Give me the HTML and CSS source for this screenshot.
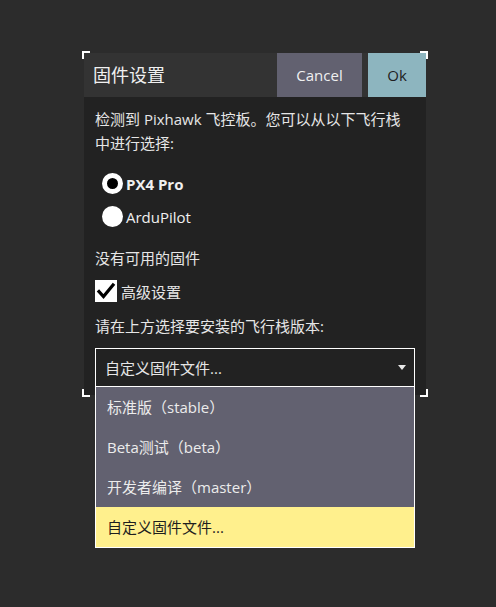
FILE: index.html
```html
<!DOCTYPE html>
<html>
<head>
<meta charset="utf-8">
<link rel="stylesheet" href="styles.css">
</head>
<body>
<div class="canvas">
  <div class="dialog">
    <span class="corner tl"></span><span class="corner tr"></span>
    <span class="corner bl"></span><span class="corner br"></span>
    <div class="titlebar">
      <div class="title">固件设置</div>
      <div class="btn cancel">Cancel</div>
      <div class="btn ok">Ok</div>
    </div>
    <div class="content">
      <p class="para">检测到 Pixhawk 飞控板。您可以从以下飞行栈中进行选择:</p>
      <div class="radios">
        <div class="radio-row"><span class="radio checked"></span><span class="radio-label bold">PX4 Pro</span></div>
        <div class="radio-row"><span class="radio"></span><span class="radio-label">ArduPilot</span></div>
      </div>
      <p class="line none">没有可用的固件</p>
      <div class="check-row">
        <span class="checkbox"><svg width="22" height="22" viewBox="0 0 22 22"><path d="M4 11.5 L8.5 16.5 L18 5" fill="none" stroke="#000" stroke-width="3.2" stroke-linecap="square"/></svg></span>
        <span class="check-label">高级设置</span>
      </div>
      <p class="line ask">请在上方选择要安装的飞行栈版本:</p>
      <div class="combo">
        <span class="combo-text">自定义固件文件...</span>
        <span class="arrow"></span>
        <div class="popup">
          <div class="item">标准版（stable）</div>
          <div class="item">Beta测试（beta）</div>
          <div class="item">开发者编译（master）</div>
          <div class="item current">自定义固件文件...</div>
        </div>
      </div>
    </div>
  </div>
</div>
</body>
</html>
```

FILE: styles.css
```css
html, body {
  margin: 0;
  padding: 0;
  background: #2c2c2c;
  width: 496px;
  height: 607px;
  overflow: hidden;
  font-family: "Open Sans", "Noto Sans CJK SC", sans-serif;
  color: #e6e6e6;
}
.canvas {
  padding: 53px 0 0 84px;
}
.dialog {
  position: relative;
  width: 342px;
  height: 342px;
  background: #222222;
}
.corner {
  position: absolute;
  width: 8px;
  height: 8px;
  border-color: #ffffff;
  border-style: solid;
  border-width: 0;
  box-sizing: border-box;
}
.corner.tl { left: -2px; top: -2px; border-top-width: 2px; border-left-width: 2px; }
.corner.tr { right: -2px; top: -2px; border-top-width: 2px; border-right-width: 2px; }
.corner.bl { left: -2px; bottom: -2px; border-bottom-width: 2px; border-left-width: 2px; }
.corner.br { right: -2px; bottom: -2px; border-bottom-width: 2px; border-right-width: 2px; }
.titlebar {
  display: flex;
  height: 44px;
  background: #333333;
  align-items: stretch;
}
.title {
  flex: 1;
  font-size: 18px;
  line-height: 44px;
  padding-left: 9px;
  color: #f0f0f0;
}
.btn {
  display: flex;
  align-items: center;
  justify-content: center;
  font-size: 15px;
}
.cancel {
  width: 85px;
  background: #626170;
  color: #f0f0f0;
  margin-right: 6px;
}
.ok {
  width: 58px;
  background: #8db5bf;
  color: #1e1e1e;
}
.content {
  padding: 10px 11px 0 11px;
  font-size: 15px;
}
.para {
  margin: 0;
  line-height: 24px;
}
.radios {
  margin-top: 12px;
}
.radio-row {
  display: flex;
  align-items: center;
  height: 33px;
}
.radio {
  width: 21px;
  height: 21px;
  border-radius: 50%;
  background: #fff;
  margin-left: 7px;
  margin-right: 3px;
  box-sizing: border-box;
}
.radio.checked {
  border: 5.5px solid #fff;
  background: #000;
}
.radio-label {
  font-size: 15px;
  color: #f0f0f0;
}
.bold { font-weight: bold; }
.line {
  margin: 0;
  line-height: 24px;
}
.none { margin-top: 13px; }
.check-row {
  display: flex;
  align-items: center;
  height: 24px;
  margin-top: 9px;
}
.checkbox {
  width: 22px;
  height: 22px;
  background: #fff;
  display: block;
  margin-right: 4px;
}
.checkbox svg { display: block; }
.ask { margin-top: 11px; }
.combo {
  position: relative;
  margin-top: 10px;
  height: 39px;
  border: 1px solid #ffffff;
  box-sizing: border-box;
  display: flex;
  align-items: center;
  padding-left: 9px;
}
.combo-text { flex: 1; }
.arrow {
  width: 0;
  height: 0;
  border-left: 4px solid transparent;
  border-right: 4px solid transparent;
  border-top: 5px solid #e8e8e8;
  margin-right: 8px;
}
.popup {
  position: absolute;
  left: -1px;
  right: -1px;
  top: 100%;
  border: 1px solid #ffffff;
  background: #626170;
  z-index: 5;
}
.item {
  height: 40px;
  line-height: 40px;
  padding-left: 11px;
  color: #ececec;
}
.item.current {
  background: #fff08d;
  color: #1e1e1e;
}
```
